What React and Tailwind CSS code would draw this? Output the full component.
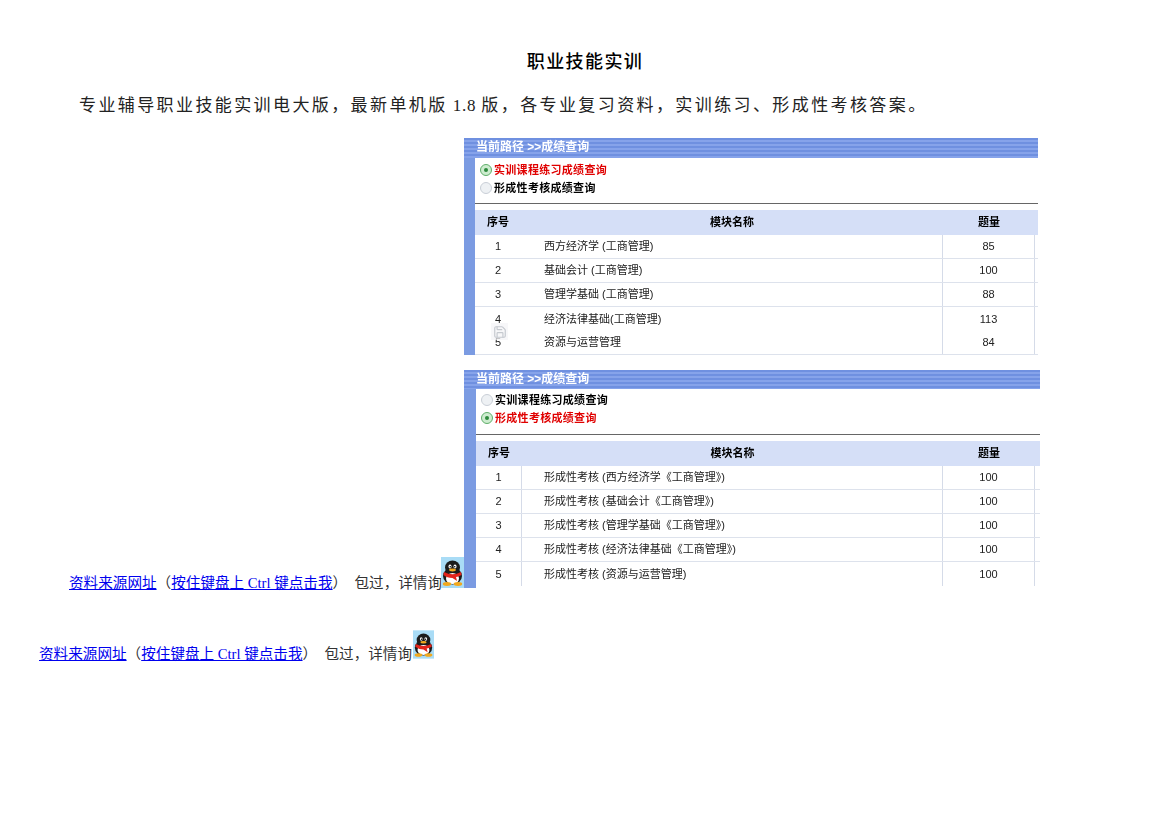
import React from "react";
import { Save } from "lucide-react";

const panelOne = [
  { no: "1", name: "西方经济学 (工商管理)", qty: "85" },
  { no: "2", name: "基础会计 (工商管理)", qty: "100" },
  { no: "3", name: "管理学基础 (工商管理)", qty: "88" },
  { no: "4", name: "经济法律基础(工商管理)", qty: "113", noLine: true },
  { no: "5", name: "资源与运营管理", qty: "84" },
];

const panelTwo = [
  { no: "1", name: "形成性考核 (西方经济学《工商管理》)", qty: "100" },
  { no: "2", name: "形成性考核 (基础会计《工商管理》)", qty: "100" },
  { no: "3", name: "形成性考核 (管理学基础《工商管理》)", qty: "100" },
  { no: "4", name: "形成性考核 (经济法律基础《工商管理》)", qty: "100" },
  { no: "5", name: "形成性考核 (资源与运营管理)", qty: "100", noLine: true },
];

const Radio = ({ on }) => (
  <span
    className={`flex h-3 w-3 shrink-0 items-center justify-center rounded-full border ${
      on ? "border-[#5fae6a] bg-[#cdeccf]" : "border-[#c8ced6] bg-[#eef1f4]"
    }`}
  >
    {on && <span className="h-1 w-1 rounded-full bg-[#2c8a3c]" />}
  </span>
);

const RadioRow = ({ on, label }) => (
  <div className="flex h-[18px] items-center gap-[2px] pl-[5px]">
    <Radio on={on} />
    <span className={`text-[11px] font-bold tracking-[0.3px] ${on ? "text-[#e00000]" : "text-black"}`}>{label}</span>
  </div>
);

const Panel = ({ width, height, barWidth, headerHeight, radioTop, hrGap, rows, firstOn, midLine, cols, namePad, children }) => (
  <div className={`relative flex shrink-0 flex-col ${width} ${height} blur-[0.3px] font-['Liberation_Sans','Noto_Sans_CJK_SC',sans-serif]`}>
    <div
      className={`${headerHeight} shrink-0 bg-[repeating-linear-gradient(180deg,#6f90e0_0px,#6f90e0_2px,#86a3ea_2px,#86a3ea_4px)] pl-3 text-[12px] font-bold leading-[19px] text-white`}
    >
      当前路径 &gt;&gt;成绩查询
    </div>
    <div className="flex min-h-0 flex-1">
      <div className={`${barWidth} shrink-0 bg-[#7b9be2]`} />
      <div className={`flex min-w-0 flex-1 flex-col ${radioTop}`}>
        <RadioRow on={firstOn} label="实训课程练习成绩查询" />
        <RadioRow on={!firstOn} label="形成性考核成绩查询" />
        <div className={`${hrGap} h-px bg-[#666]`} />
        <div className={`mt-[6px] grid h-[25px] shrink-0 ${cols} items-center bg-[#d5dff7] text-[11px] font-bold text-black`}>
          <span className="text-center">序号</span>
          <span className="text-center">模块名称</span>
          <span className="text-center">题量</span>
          <span />
        </div>
        {rows.map((row) => (
          <div
            key={row.no}
            className={`grid h-6 shrink-0 ${cols} items-center text-[11px] text-[#222] ${
              row.noLine ? "" : "border-b border-[#dde2ec]"
            }`}
          >
            <span className={`flex h-full items-center justify-center ${midLine ? "border-r border-[#d5dbe8]" : ""}`}>{row.no}</span>
            <span className={`flex h-full items-center border-r border-[#d5dbe8] ${namePad}`}>{row.name}</span>
            <span className="flex h-full items-center justify-center border-r border-[#d5dbe8]">{row.qty}</span>
            <span />
          </div>
        ))}
      </div>
    </div>
    {children}
  </div>
);

const Penguin = ({ size }) => (
  <svg className={`${size} shrink-0`} viewBox="0 0 23 31">
    <rect width="23" height="31" fill="#a9dcf6" />
    <ellipse cx="11.5" cy="19" rx="9.5" ry="8.5" fill="#1c1c1c" />
    <ellipse cx="11.5" cy="10.5" rx="7.5" ry="7" fill="#1c1c1c" />
    <ellipse cx="11.5" cy="21.5" rx="6.5" ry="5.5" fill="#ffffff" />
    <ellipse cx="9" cy="9.5" rx="1.5" ry="2" fill="#ffffff" />
    <ellipse cx="14" cy="9.5" rx="1.5" ry="2" fill="#ffffff" />
    <circle cx="9.3" cy="9.8" r="0.8" fill="#111" />
    <circle cx="13.7" cy="9.8" r="0.8" fill="#111" />
    <ellipse cx="11.5" cy="13" rx="3.4" ry="1.4" fill="#f2a81d" />
    <path d="M3 15 Q11.5 19.5 20 15 L20.5 18 Q17 20 15 20 L16 24 L11.5 21 Q6 21 2.5 18 Z" fill="#e3241b" />
    <ellipse cx="6" cy="27" rx="4.2" ry="1.9" fill="#f2a81d" />
    <ellipse cx="17" cy="27" rx="4.2" ry="1.9" fill="#f2a81d" />
  </svg>
);

const SourceLine = () => (
  <span className="text-[14.6px] leading-[20px] text-[#333]">
    <a href="#" className="text-[#0000ee] underline">资料来源网址</a>
    <span>（</span>
    <a href="#" className="text-[#0000ee] underline">按住键盘上 Ctrl 键点击我</a>
    <span>）&nbsp; 包过，详情询</span>
  </span>
);

const App = () => {
  return (
    <div className="h-[826px] bg-white font-['Liberation_Serif','Noto_Sans_CJK_SC',serif] text-black">
      <h1 className="pt-[51px] pl-px text-center text-[18px] font-medium leading-[22px] tracking-[1.4px]">职业技能实训</h1>
      <p className="mt-[22px] pl-[79px] text-[17px] leading-[22px] tracking-[2.4px] text-[#222]">
        专业辅导职业技能实训电大版，最新单机版<span className="tracking-[0.8px]"> 1.8 </span>版，各专业复习资料，实训练习、形成性考核答案。
      </p>

      <div className="mt-[21px] pl-[464px]">
        <Panel
          width="w-[574px]"
          height="h-[217px]"
          barWidth="w-[11px]"
          headerHeight="h-5"
          radioTop="pt-[3px]"
          hrGap="mt-[6px]"
          rows={panelOne}
          cols="grid-cols-[46px_422px_92px_1fr]"
          namePad="pl-[23px]"
          firstOn
        >
          <div className="absolute left-[27px] top-[185px] flex h-[17px] w-[17px] items-center justify-center bg-[#f3f4f7]/70">
            <Save size={14} className="text-[#c5c9cf]" />
          </div>
        </Panel>
      </div>

      <div className="mt-[15px] flex items-end pl-[69px]">
        <div className="mb-[-8px] w-[372px] whitespace-nowrap pb-[1px]">
          <SourceLine />
        </div>
        <Penguin size="h-[31px] w-[23px]" />
        <Panel
          width="w-[576px]"
          height="h-[218px]"
          barWidth="w-3"
          headerHeight="h-[19px]"
          radioTop="pt-[2px]"
          hrGap="mt-[7px]"
          rows={panelTwo}
          cols="grid-cols-[46px_421px_92px_1fr]"
          namePad="pl-[22px]"
          midLine
        />
      </div>

      <div className="mt-[42px] flex items-end pl-[39px]">
        <div className="mb-[-8px] w-[374px] whitespace-nowrap pb-[1px]">
          <SourceLine />
        </div>
        <Penguin size="h-[29px] w-[21px]" />
      </div>
    </div>
  );
};

export default App;
